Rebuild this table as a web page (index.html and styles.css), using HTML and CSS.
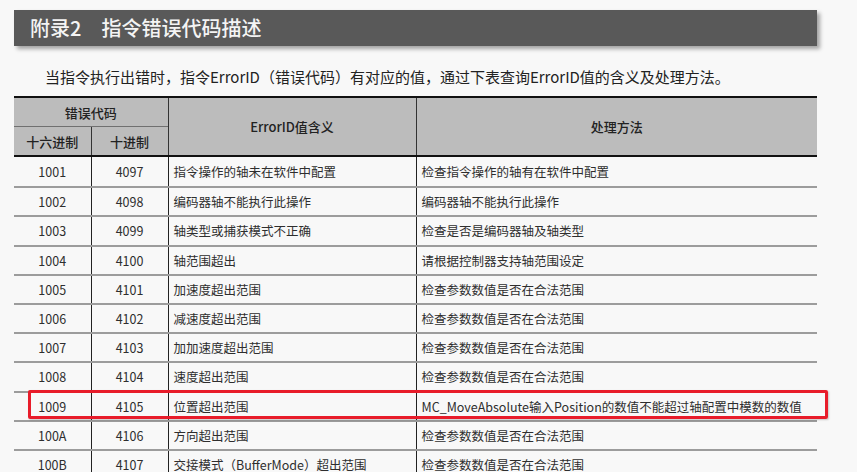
FILE: index.html
```html
<!DOCTYPE html>
<html lang="zh-CN">
<head>
<meta charset="utf-8">
<link rel="stylesheet" href="styles.css">
</head>
<body>
<div class="page">
  <div class="title-bar"><span class="title-num">附录2</span><span class="title-text">指令错误代码描述</span></div>
  <p class="intro">当指令执行出错时，指令ErrorID（错误代码）有对应的值，通过下表查询ErrorID值的含义及处理方法。</p>
  <div class="table-wrap">
    <table class="err-table">
      <colgroup>
        <col class="c-hex"><col class="c-dec"><col class="c-mean"><col class="c-fix">
      </colgroup>
      <thead>
        <tr class="h1">
          <th colspan="2" class="h-code">错误代码</th>
          <th rowspan="2">ErrorID值含义</th>
          <th rowspan="2">处理方法</th>
        </tr>
        <tr class="h2">
          <th>十六进制</th>
          <th>十进制</th>
        </tr>
      </thead>
      <tbody>
        <tr><td class="num">1001</td><td class="num">4097</td><td>指令操作的轴未在软件中配置</td><td>检查指令操作的轴有在软件中配置</td></tr>
        <tr><td class="num">1002</td><td class="num">4098</td><td>编码器轴不能执行此操作</td><td>编码器轴不能执行此操作</td></tr>
        <tr><td class="num">1003</td><td class="num">4099</td><td>轴类型或捕获模式不正确</td><td>检查是否是编码器轴及轴类型</td></tr>
        <tr><td class="num">1004</td><td class="num">4100</td><td>轴范围超出</td><td>请根据控制器支持轴范围设定</td></tr>
        <tr><td class="num">1005</td><td class="num">4101</td><td>加速度超出范围</td><td>检查参数数值是否在合法范围</td></tr>
        <tr><td class="num">1006</td><td class="num">4102</td><td>减速度超出范围</td><td>检查参数数值是否在合法范围</td></tr>
        <tr><td class="num">1007</td><td class="num">4103</td><td>加加速度超出范围</td><td>检查参数数值是否在合法范围</td></tr>
        <tr><td class="num">1008</td><td class="num">4104</td><td>速度超出范围</td><td>检查参数数值是否在合法范围</td></tr>
        <tr><td class="num">1009</td><td class="num">4105</td><td>位置超出范围</td><td>MC_MoveAbsolute输入Position的数值不能超过轴配置中模数的数值</td></tr>
        <tr><td class="num">100A</td><td class="num">4106</td><td>方向超出范围</td><td>检查参数数值是否在合法范围</td></tr>
        <tr><td class="num">100B</td><td class="num">4107</td><td>交接模式（BufferMode）超出范围</td><td>检查参数数值是否在合法范围</td></tr>
      </tbody>
    </table>
    <div class="highlight"></div>
  </div>
</div>
</body>
</html>
```
FILE: styles.css
```css
html, body {
  margin: 0;
  padding: 0;
  background: #f8f8f8;
}
body {
  font-family: "Noto Sans CJK SC", "Noto Sans", sans-serif;
  color: #2a2a2a;
  overflow: hidden;
}
.page {
  padding: 10px 40px 0 14px;
  width: 803px;
}
.title-bar {
  height: 36px;
  background: #595959;
  box-shadow: 3px 3px 4px rgba(0, 0, 0, 0.35);
  color: #f4f4f4;
  font-size: 20px;
  font-weight: 500;
  display: flex;
  align-items: center;
  padding-left: 16px;
  gap: 20px;
  line-height: 1;
}
.intro {
  margin: 22px 0 0 31px;
  font-size: 15px;
  line-height: 18px;
  color: #222;
}
.table-wrap {
  position: relative;
  margin-top: 10px;
}
.err-table {
  width: 803px;
  border-collapse: collapse;
  table-layout: fixed;
  font-size: 12.5px;
  border-top: 2px solid #111;
}
.c-hex { width: 77px; }
.c-dec { width: 77px; }
.c-mean { width: 248px; }
.c-fix { width: 401px; }
.err-table th {
  background: #bcbcbc;
  font-weight: 500;
  font-size: 13px;
  color: #222;
  padding: 0;
  border-left: 1px solid #333;
  text-align: center;
}
.err-table th:first-child { border-left: none; }
.err-table .h2 th:first-child { border-left: none; }
.err-table .h1 th { height: 28px; }
.err-table .h2 th { height: 28px; border-top: 1px solid #707070; }
.err-table thead { border-bottom: 2px solid #111; }
.err-table td {
  height: 27.2px;
  padding: 0 5px;
  border-left: 1px solid #222;
  border-top: 2px solid #9c9c9c;
  color: #2e2e2e;
  white-space: nowrap;
}
.err-table tbody tr:first-child td { border-top: none; height: 29.2px; }
.err-table td:first-child { border-left: none; }
.err-table td.num { text-align: center; padding: 0; }
.highlight {
  position: absolute;
  left: 14px;
  top: 294px;
  width: 794px;
  height: 23px;
  border: 3.5px solid #e81c2a;
  border-radius: 2px;
  box-shadow: 1px 1px 2px rgba(0,0,0,0.2);
}
```
